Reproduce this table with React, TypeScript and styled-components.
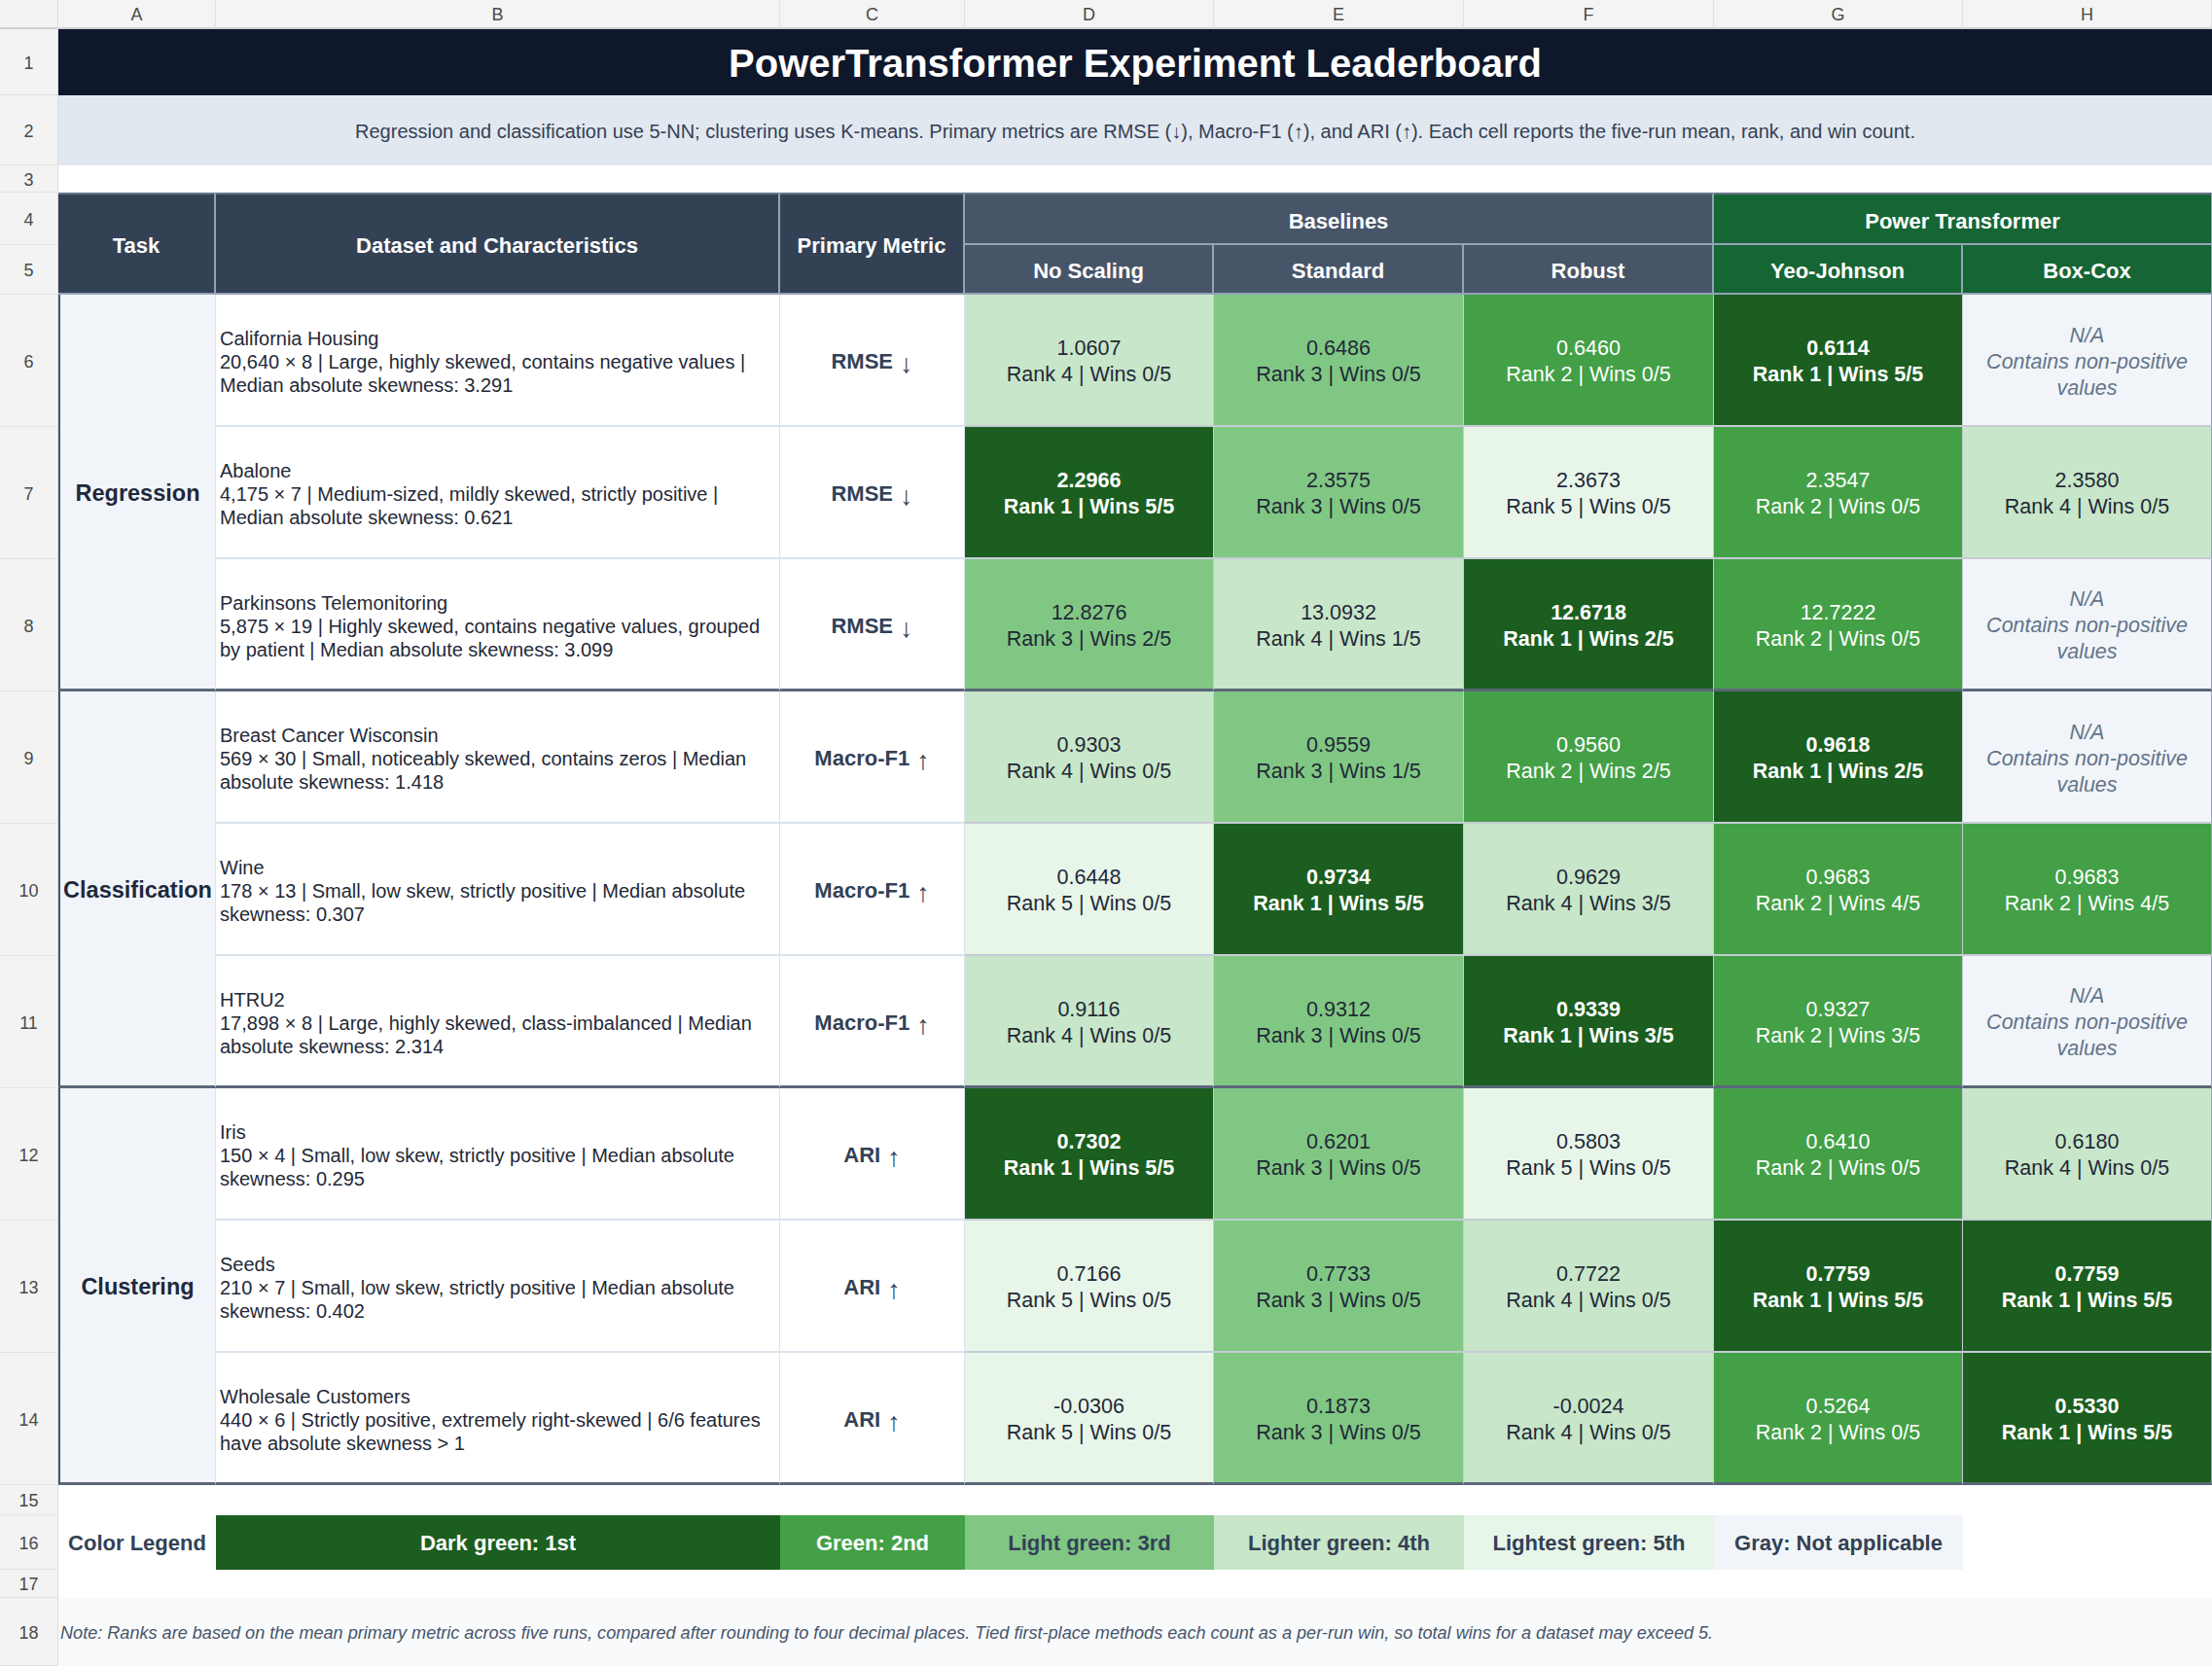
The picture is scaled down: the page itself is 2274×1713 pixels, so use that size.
import React from "react";
import styled, { createGlobalStyle, css } from "styled-components";

const GlobalStyle = createGlobalStyle`
  html, body { margin: 0; padding: 0; background: #ffffff; }
  body { font-family: "Liberation Sans", Arial, Helvetica, sans-serif; }
  *, *::before, *::after { box-sizing: border-box; }
`;

const COLS = [60, 162, 580, 190, 256, 257, 257, 256, 256];
const ROWS = [30, 68, 72, 28, 54, 51, 136, 136, 136, 136, 136, 136, 136, 136, 136, 31, 56, 29, 70];

const RANK_BG: Record<number, string> = {
  1: "#1b5e20",
  2: "#43a047",
  3: "#81c784",
  4: "#c8e6c9",
  5: "#e8f5e9",
};

type Place = { $r: number; $c: number; $rs?: number; $cs?: number };

const placement = css<Place>`
  grid-row: ${(p) => p.$r} / span ${(p) => p.$rs ?? 1};
  grid-column: ${(p) => p.$c} / span ${(p) => p.$cs ?? 1};
`;

const Sheet = styled.div`
  display: grid;
  width: 2274px;
  height: 1713px;
  grid-template-columns: ${COLS.map((c) => `${c}px`).join(" ")};
  grid-template-rows: ${ROWS.map((r) => `${r}px`).join(" ")};
  background: #ffffff;
  overflow: hidden;
`;

const Corner = styled.div<Place>`
  ${placement};
  background: #f3f3f3;
  border-right: 1px solid #dedede;
  border-bottom: 2px solid #d0d0d0;
`;

const ColLetter = styled.div<Place>`
  ${placement};
  display: flex;
  align-items: center;
  justify-content: center;
  padding-top: 2px;
  background: #f4f4f4;
  border-right: 1px solid #e0e0e0;
  border-bottom: 2px solid #d0d0d0;
  color: #4a4a4a;
  font-size: 18px;
`;

const RowNum = styled.div<Place>`
  ${placement};
  display: flex;
  align-items: center;
  justify-content: center;
  padding-top: 3px;
  background: #f3f3f3;
  border-right: 1px solid #dedede;
  border-bottom: 1px solid #e2e2e2;
  color: #4a4a4a;
  font-size: 18px;
`;

const TitleCell = styled.div<Place>`
  ${placement};
  display: flex;
  align-items: center;
  justify-content: center;
  padding-top: 2px;
  background: #0f172a;
  color: #ffffff;
  font-size: 40px;
  font-weight: 700;
`;

const SubtitleCell = styled.div<Place>`
  ${placement};
  display: flex;
  align-items: center;
  justify-content: center;
  padding-top: 2px;
  background: #e2e8f0;
  color: #334155;
  font-size: 20px;
`;

type HeadTone = "slate" | "slateLight" | "green";
const HEAD_BG: Record<HeadTone, string> = {
  slate: "#334155",
  slateLight: "#475569",
  green: "#166534",
};

const HeadCell = styled.div<Place & { $tone: HeadTone; $top?: boolean; $last?: boolean }>`
  ${placement};
  display: flex;
  align-items: center;
  justify-content: center;
  text-align: center;
  padding-top: 5px;
  background: ${(p) => HEAD_BG[p.$tone]};
  color: #ffffff;
  font-size: 22px;
  font-weight: 700;
  border-right: ${(p) => (p.$last ? "1px solid #94a3b8" : "2px solid #94a3b8")};
  border-bottom: 2px solid #94a3b8;
  ${(p) => p.$top && "border-top: 2px solid #64748b;"}
`;

const rowBorder = css<{ $groupEnd?: boolean }>`
  border-bottom: ${(p) => (p.$groupEnd ? "3px solid #5b6779" : "2px solid #dbe3ec")};
`;

const TaskCell = styled.div<Place>`
  ${placement};
  display: flex;
  align-items: center;
  justify-content: center;
  padding-top: 4px;
  background: #f1f5f9;
  color: #1e293b;
  font-size: 23.5px;
  font-weight: 700;
  white-space: nowrap;
  border-left: 2px solid #475569;
  border-right: 1px solid #dbe3ec;
  border-bottom: 3px solid #5b6779;
`;

const DatasetCell = styled.div<Place & { $groupEnd?: boolean }>`
  ${placement};
  display: flex;
  flex-direction: column;
  justify-content: center;
  padding: 4px 4px 0;
  background: #ffffff;
  color: #1f2937;
  font-size: 20px;
  line-height: 24px;
  white-space: nowrap;
  border-right: 1px solid #dbe3ec;
  ${rowBorder};
`;

const MetricCell = styled.div<Place & { $groupEnd?: boolean }>`
  ${placement};
  display: flex;
  align-items: center;
  justify-content: center;
  gap: 7px;
  padding-top: 4px;
  background: #ffffff;
  color: #334155;
  font-size: 22px;
  font-weight: 700;
  border-right: 1px solid #dbe3ec;
  ${rowBorder};
`;

const Arrow = styled.span`
  display: inline-block;
  margin-top: 5px;
  font-size: 27px;
  font-weight: 400;
  line-height: 1;
`;

const ScoreCell = styled.div<Place & { $rank: number; $groupEnd?: boolean; $last?: boolean }>`
  ${placement};
  display: flex;
  flex-direction: column;
  align-items: center;
  justify-content: center;
  padding-top: 4px;
  background: ${(p) => RANK_BG[p.$rank]};
  color: ${(p) => (p.$rank <= 2 ? "#ffffff" : "#1f2937")};
  font-weight: ${(p) => (p.$rank === 1 ? 700 : 400)};
  font-size: 21.5px;
  line-height: 27px;
  white-space: nowrap;
  border-right: 1px solid ${(p) => (p.$last ? "#94a3b8" : "#c5ccd5")};
  border-bottom: ${(p) => (p.$groupEnd ? "3px solid #5b6779" : "2px solid #c5ccd5")};
`;

const NACell = styled.div<Place & { $groupEnd?: boolean; $last?: boolean }>`
  ${placement};
  display: flex;
  flex-direction: column;
  align-items: center;
  justify-content: center;
  padding-top: 4px;
  background: #f1f5f9;
  color: #64748b;
  font-style: italic;
  font-size: 21.5px;
  line-height: 27px;
  white-space: nowrap;
  border-right: 1px solid ${(p) => (p.$last ? "#94a3b8" : "#c5ccd5")};
  border-bottom: ${(p) => (p.$groupEnd ? "3px solid #5b6779" : "2px solid #c5ccd5")};
`;

const LegendLabel = styled.div<Place>`
  ${placement};
  display: flex;
  align-items: center;
  justify-content: center;
  padding-top: 2px;
  color: #334155;
  font-size: 22px;
  font-weight: 700;
  white-space: nowrap;
`;

const LegendSwatch = styled.div<Place & { $bg: string; $fg: string }>`
  ${placement};
  display: flex;
  align-items: center;
  justify-content: center;
  padding-top: 2px;
  background: ${(p) => p.$bg};
  color: ${(p) => p.$fg};
  font-size: 22px;
  font-weight: 700;
  white-space: nowrap;
`;

const NoteCell = styled.div<Place>`
  ${placement};
  display: flex;
  align-items: center;
  padding: 3px 0 0 2px;
  background: #f8fafc;
  color: #475569;
  font-size: 18.1px;
  font-style: italic;
  white-space: nowrap;
`;

type Score = { v: string; rank: number; wins: number } | null;

type Dataset = {
  lines: [string, string, string];
  metric: "RMSE" | "Macro-F1" | "ARI";
  scores: Score[];
};

const NA = null;

const GROUPS: { task: string; rows: Dataset[] }[] = [
  {
    task: "Regression",
    rows: [
      {
        lines: [
          "California Housing",
          "20,640 × 8 | Large, highly skewed, contains negative values |",
          "Median absolute skewness: 3.291",
        ],
        metric: "RMSE",
        scores: [
          { v: "1.0607", rank: 4, wins: 0 },
          { v: "0.6486", rank: 3, wins: 0 },
          { v: "0.6460", rank: 2, wins: 0 },
          { v: "0.6114", rank: 1, wins: 5 },
          NA,
        ],
      },
      {
        lines: [
          "Abalone",
          "4,175 × 7 | Medium-sized, mildly skewed, strictly positive |",
          "Median absolute skewness: 0.621",
        ],
        metric: "RMSE",
        scores: [
          { v: "2.2966", rank: 1, wins: 5 },
          { v: "2.3575", rank: 3, wins: 0 },
          { v: "2.3673", rank: 5, wins: 0 },
          { v: "2.3547", rank: 2, wins: 0 },
          { v: "2.3580", rank: 4, wins: 0 },
        ],
      },
      {
        lines: [
          "Parkinsons Telemonitoring",
          "5,875 × 19 | Highly skewed, contains negative values, grouped",
          "by patient | Median absolute skewness: 3.099",
        ],
        metric: "RMSE",
        scores: [
          { v: "12.8276", rank: 3, wins: 2 },
          { v: "13.0932", rank: 4, wins: 1 },
          { v: "12.6718", rank: 1, wins: 2 },
          { v: "12.7222", rank: 2, wins: 0 },
          NA,
        ],
      },
    ],
  },
  {
    task: "Classification",
    rows: [
      {
        lines: [
          "Breast Cancer Wisconsin",
          "569 × 30 | Small, noticeably skewed, contains zeros | Median",
          "absolute skewness: 1.418",
        ],
        metric: "Macro-F1",
        scores: [
          { v: "0.9303", rank: 4, wins: 0 },
          { v: "0.9559", rank: 3, wins: 1 },
          { v: "0.9560", rank: 2, wins: 2 },
          { v: "0.9618", rank: 1, wins: 2 },
          NA,
        ],
      },
      {
        lines: [
          "Wine",
          "178 × 13 | Small, low skew, strictly positive | Median absolute",
          "skewness: 0.307",
        ],
        metric: "Macro-F1",
        scores: [
          { v: "0.6448", rank: 5, wins: 0 },
          { v: "0.9734", rank: 1, wins: 5 },
          { v: "0.9629", rank: 4, wins: 3 },
          { v: "0.9683", rank: 2, wins: 4 },
          { v: "0.9683", rank: 2, wins: 4 },
        ],
      },
      {
        lines: [
          "HTRU2",
          "17,898 × 8 | Large, highly skewed, class-imbalanced | Median",
          "absolute skewness: 2.314",
        ],
        metric: "Macro-F1",
        scores: [
          { v: "0.9116", rank: 4, wins: 0 },
          { v: "0.9312", rank: 3, wins: 0 },
          { v: "0.9339", rank: 1, wins: 3 },
          { v: "0.9327", rank: 2, wins: 3 },
          NA,
        ],
      },
    ],
  },
  {
    task: "Clustering",
    rows: [
      {
        lines: [
          "Iris",
          "150 × 4 | Small, low skew, strictly positive | Median absolute",
          "skewness: 0.295",
        ],
        metric: "ARI",
        scores: [
          { v: "0.7302", rank: 1, wins: 5 },
          { v: "0.6201", rank: 3, wins: 0 },
          { v: "0.5803", rank: 5, wins: 0 },
          { v: "0.6410", rank: 2, wins: 0 },
          { v: "0.6180", rank: 4, wins: 0 },
        ],
      },
      {
        lines: [
          "Seeds",
          "210 × 7 | Small, low skew, strictly positive | Median absolute",
          "skewness: 0.402",
        ],
        metric: "ARI",
        scores: [
          { v: "0.7166", rank: 5, wins: 0 },
          { v: "0.7733", rank: 3, wins: 0 },
          { v: "0.7722", rank: 4, wins: 0 },
          { v: "0.7759", rank: 1, wins: 5 },
          { v: "0.7759", rank: 1, wins: 5 },
        ],
      },
      {
        lines: [
          "Wholesale Customers",
          "440 × 6 | Strictly positive, extremely right-skewed | 6/6 features",
          "have absolute skewness > 1",
        ],
        metric: "ARI",
        scores: [
          { v: "-0.0306", rank: 5, wins: 0 },
          { v: "0.1873", rank: 3, wins: 0 },
          { v: "-0.0024", rank: 4, wins: 0 },
          { v: "0.5264", rank: 2, wins: 0 },
          { v: "0.5330", rank: 1, wins: 5 },
        ],
      },
    ],
  },
];

const LETTERS = ["A", "B", "C", "D", "E", "F", "G", "H"];

const LEGEND = [
  { label: "Dark green: 1st", bg: "#1b5e20", fg: "#ffffff" },
  { label: "Green: 2nd", bg: "#43a047", fg: "#ffffff" },
  { label: "Light green: 3rd", bg: "#81c784", fg: "#334155" },
  { label: "Lighter green: 4th", bg: "#c8e6c9", fg: "#334155" },
  { label: "Lightest green: 5th", bg: "#e8f5e9", fg: "#334155" },
  { label: "Gray: Not applicable", bg: "#f1f5f9", fg: "#334155" },
];

export default function App() {
  const body: React.ReactNode[] = [];
  GROUPS.forEach((g, gi) => {
    const firstRow = 7 + gi * 3;
    body.push(
      <TaskCell key={`task-${gi}`} $r={firstRow} $c={2} $rs={3}>
        {g.task}
      </TaskCell>
    );
    g.rows.forEach((d, di) => {
      const r = firstRow + di;
      const end = di === 2;
      body.push(
        <DatasetCell key={`ds-${r}`} $r={r} $c={3} $groupEnd={end}>
          {d.lines.map((l, i) => (
            <div key={i}>{l}</div>
          ))}
        </DatasetCell>
      );
      body.push(
        <MetricCell key={`m-${r}`} $r={r} $c={4} $groupEnd={end}>
          <span>{d.metric}</span>
          <Arrow>{d.metric === "RMSE" ? "↓" : "↑"}</Arrow>
        </MetricCell>
      );
      d.scores.forEach((s, si) => {
        const c = 5 + si;
        const last = si === 4;
        if (s) {
          body.push(
            <ScoreCell key={`s-${r}-${c}`} $r={r} $c={c} $rank={s.rank} $groupEnd={end} $last={last}>
              <div>{s.v}</div>
              <div>{`Rank ${s.rank} | Wins ${s.wins}/5`}</div>
            </ScoreCell>
          );
        } else {
          body.push(
            <NACell key={`s-${r}-${c}`} $r={r} $c={c} $groupEnd={end} $last={last}>
              <div>N/A</div>
              <div>Contains non-positive</div>
              <div>values</div>
            </NACell>
          );
        }
      });
    });
  });

  return (
    <>
      <GlobalStyle />
      <Sheet>
        <Corner $r={1} $c={1} />
        {LETTERS.map((l, i) => (
          <ColLetter key={l} $r={1} $c={i + 2}>
            {l}
          </ColLetter>
        ))}
        {Array.from({ length: 18 }, (_, i) => (
          <RowNum key={i} $r={i + 2} $c={1}>
            {i + 1}
          </RowNum>
        ))}

        <TitleCell $r={2} $c={2} $cs={8}>
          PowerTransformer Experiment Leaderboard
        </TitleCell>
        <SubtitleCell $r={3} $c={2} $cs={8}>
          Regression and classification use 5-NN; clustering uses K-means. Primary metrics are RMSE (↓), Macro-F1
          (↑), and ARI (↑). Each cell reports the five-run mean, rank, and win count.
        </SubtitleCell>

        <HeadCell $r={5} $c={2} $rs={2} $tone="slate" $top>
          Task
        </HeadCell>
        <HeadCell $r={5} $c={3} $rs={2} $tone="slate" $top>
          Dataset and Characteristics
        </HeadCell>
        <HeadCell $r={5} $c={4} $rs={2} $tone="slate" $top>
          Primary Metric
        </HeadCell>
        <HeadCell $r={5} $c={5} $cs={3} $tone="slateLight" $top>
          Baselines
        </HeadCell>
        <HeadCell $r={5} $c={8} $cs={2} $tone="green" $top $last>
          Power Transformer
        </HeadCell>
        <HeadCell $r={6} $c={5} $tone="slateLight">
          No Scaling
        </HeadCell>
        <HeadCell $r={6} $c={6} $tone="slateLight">
          Standard
        </HeadCell>
        <HeadCell $r={6} $c={7} $tone="slateLight">
          Robust
        </HeadCell>
        <HeadCell $r={6} $c={8} $tone="green">
          Yeo-Johnson
        </HeadCell>
        <HeadCell $r={6} $c={9} $tone="green" $last>
          Box-Cox
        </HeadCell>

        {body}

        <LegendLabel $r={17} $c={2}>
          Color Legend
        </LegendLabel>
        {LEGEND.map((l, i) => (
          <LegendSwatch key={l.label} $r={17} $c={3 + i} $bg={l.bg} $fg={l.fg}>
            {l.label}
          </LegendSwatch>
        ))}

        <NoteCell $r={19} $c={2} $cs={8}>
          Note: Ranks are based on the mean primary metric across five runs, compared after rounding to four decimal
          places. Tied first-place methods each count as a per-run win, so total wins for a dataset may exceed 5.
        </NoteCell>
      </Sheet>
    </>
  );
}
